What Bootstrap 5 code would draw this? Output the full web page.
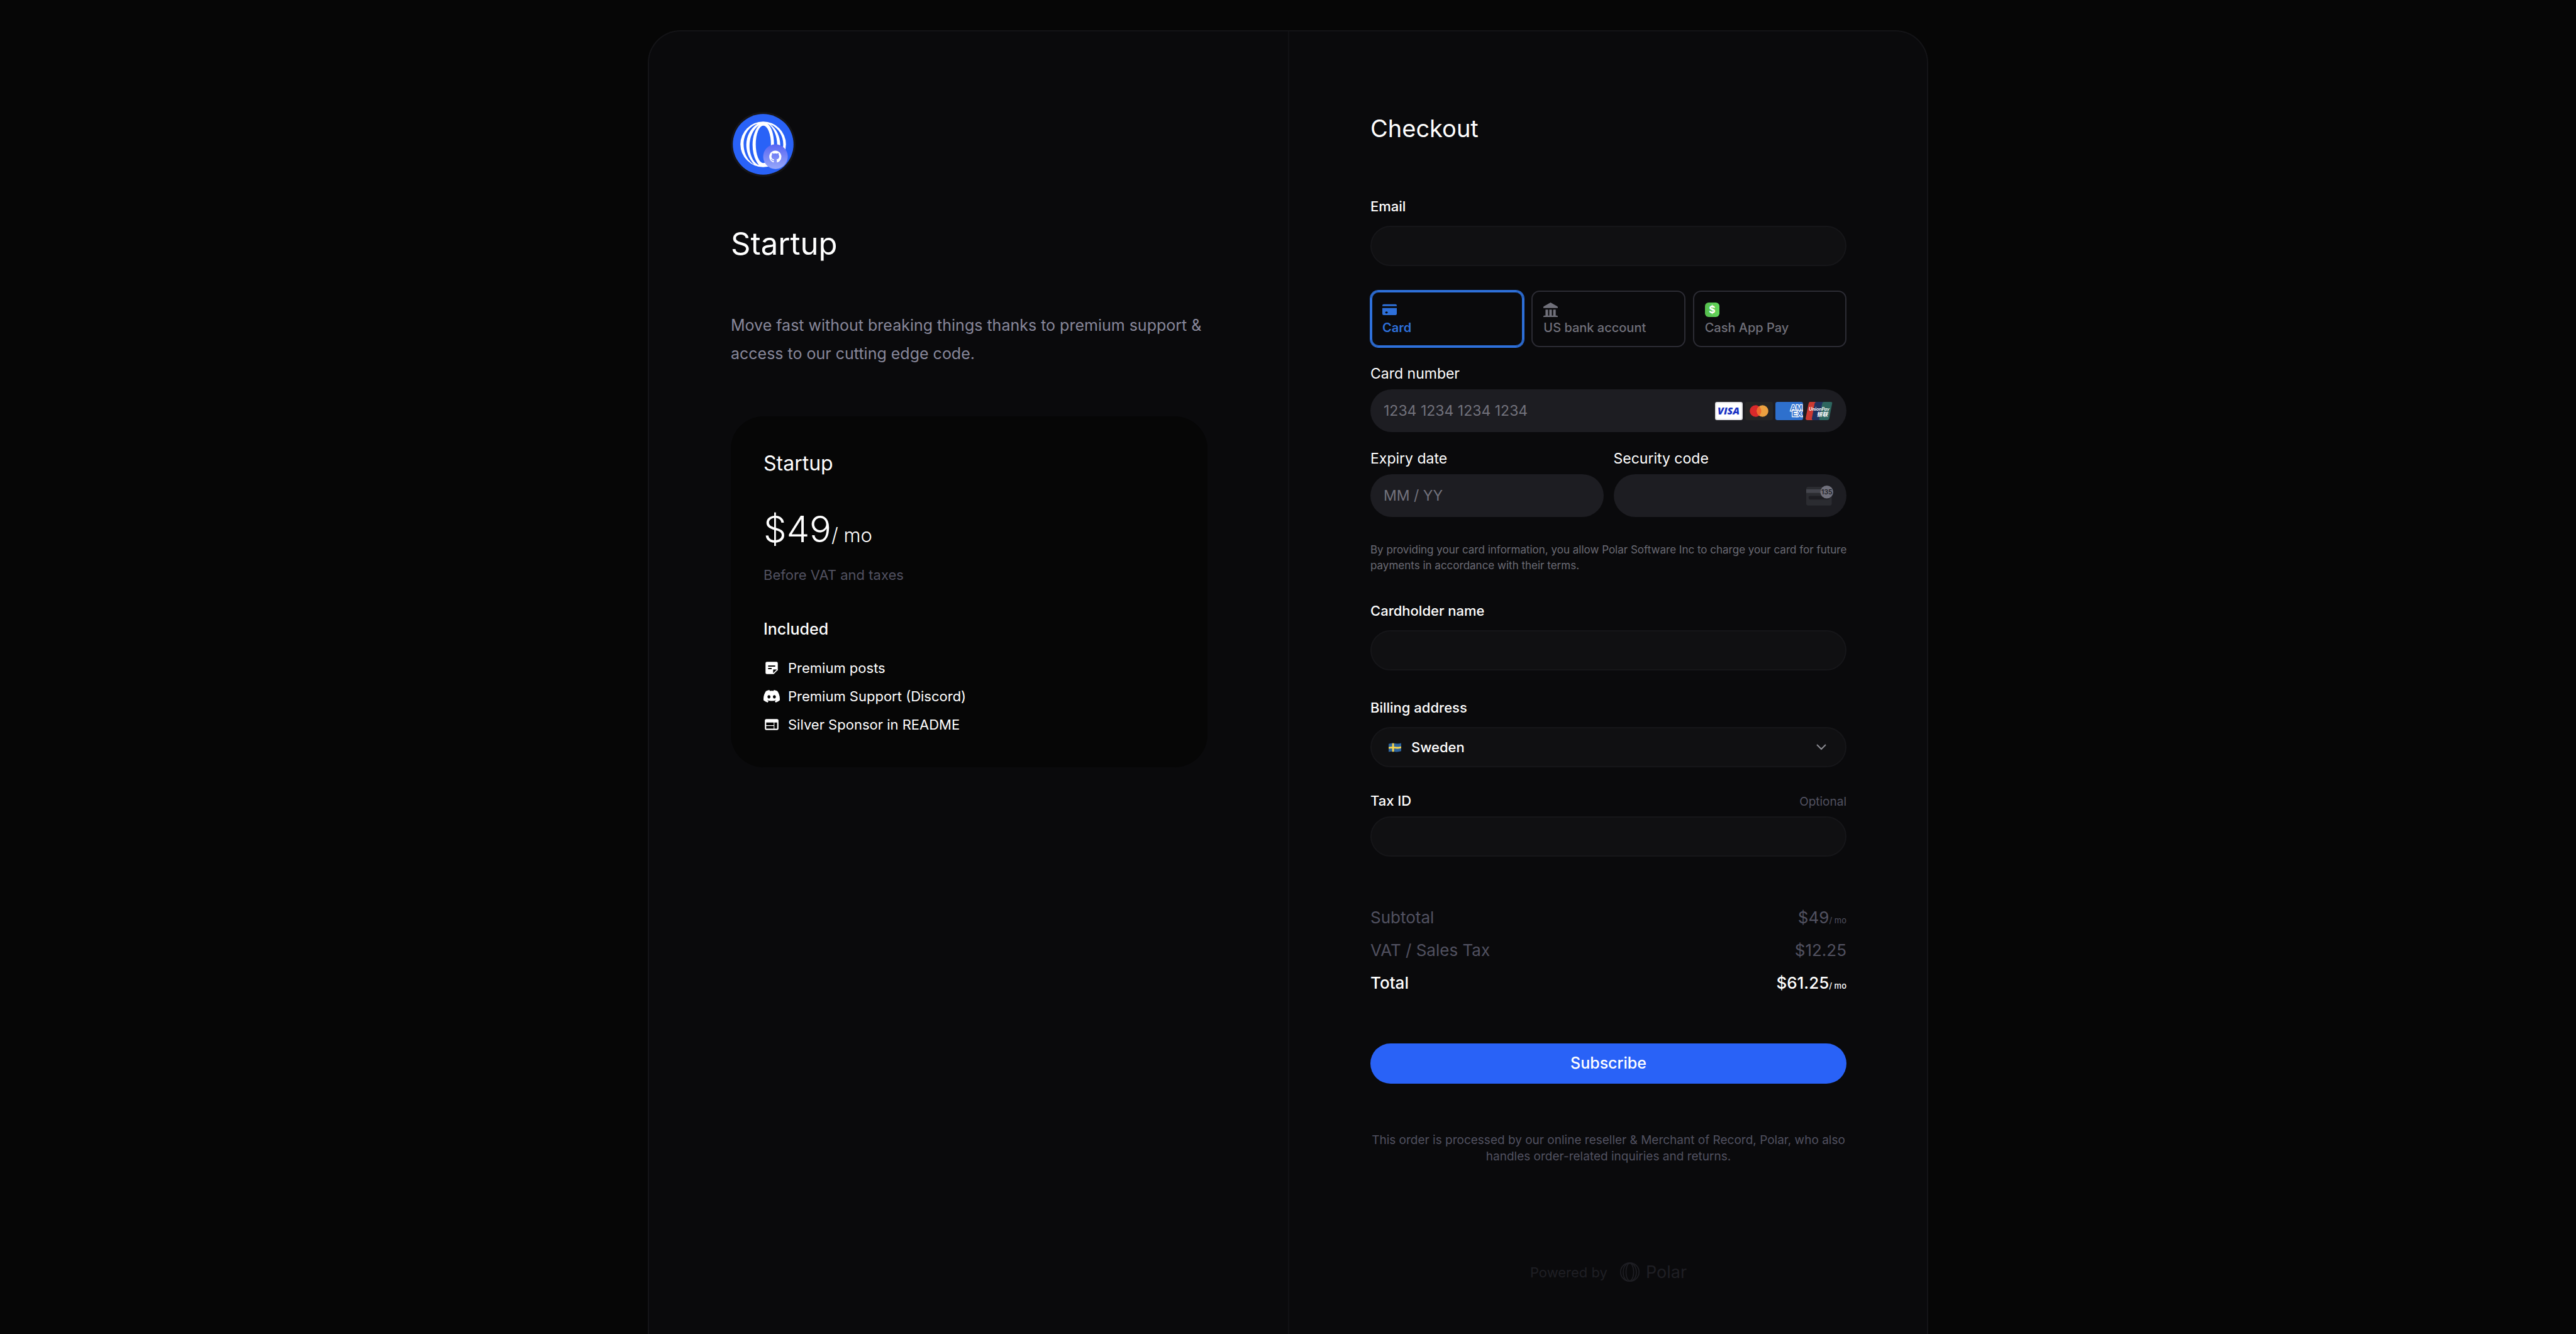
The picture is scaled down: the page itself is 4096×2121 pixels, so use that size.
<!DOCTYPE html>
<html lang="en" data-bs-theme="dark">
<head>
<meta charset="utf-8">
<meta name="viewport" content="width=device-width, initial-scale=1">
<title>Checkout</title>
<link href="https://cdn.jsdelivr.net/npm/bootstrap@5.3.0/dist/css/bootstrap.min.css" rel="stylesheet">
<style>
body { background: #060606; color: #fff; font-family: Inter, "Liberation Sans", sans-serif; font-size: 22px; line-height: 32px; }
svg { display: block; flex-shrink: 0; }
.shell { max-width: 2036px; background: #0a0a0c; border: 2px solid #141417; border-bottom: 0; border-radius: 52px 52px 0 0; }
.page-top { padding-top: 48px; }
.pane { padding: 128px 128px 80px 130px; }
.pane + .pane { border-left: 2px solid #111114; padding-left: 129px; }
.title-xl { font-size: 49px; line-height: 58px; margin: 78px 0; font-weight: 400; }
.title-lg { font-size: 38px; line-height: 52px; margin: 0 0 84px; font-weight: 400; }
.intro { font-size: 25px; line-height: 45px; color: #87879a; margin: 0 0 77px; }
.plan { background: #060606; border-radius: 52px; padding: 52px; }
.plan-name { font-size: 32px; line-height: 45px; margin: 0 0 53px; font-weight: 400; }
.price { font-size: 58px; line-height: 58px; margin: 0 0 28px; font-weight: 300; }
.price span { font-size: 31px; line-height: 1; }
.faint { color: #515160; }
.plan-note { margin: 0 0 51px; }
.plan-sub { font-size: 25px; line-height: 39px; margin: 0 0 26px; font-weight: 500; }
.perks { gap: 13px; }
.perks li { gap: 13px; }
.label-text { line-height: 28px; margin: 0 0 17px; font-weight: 500; display: block; }
.label-tight { margin-bottom: 11px; }
.label-plain { font-weight: 400; font-size: 23px; }
.field { width: 100%; height: 64px; border: 2px solid #161619; border-radius: 32px; background: #101012; color: #fff; padding: 0 27px; }
.field-pay { height: 68px; border: 0; border-radius: 34px; background: #1d1d22; padding: 0 21px; gap: 4px; font-size: 23px; }
.field input, .field select { min-width: 0; color: #fff; background: transparent; border: 0; padding: 0; outline: 0; appearance: none; }
.field input::placeholder { color: #72727c; opacity: 1; }
.space-a { margin-bottom: 39px; }
.space-b { margin-bottom: 28px; }
.space-c { margin-bottom: 45px; }
.half { flex: 1 1 0; min-width: 0; }
.methods { gap: 12px; }
.method { flex: 1 1 0; height: 90px; border: 2px solid #2c2c34; border-radius: 13px; padding: 14px 17px; color: #70707a; font-size: 20px; line-height: 28px; font-weight: 500; cursor: pointer; }
.method svg { margin: 3px 0 3px; }
.btn-check:checked + .method { border-color: #2e70da; color: #2e70da; box-shadow: 0 0 0 1px #2e70da, inset 0 0 0 1px #2e70da; font-weight: 600; }
.terms { font-size: 17px; line-height: 25px; color: #6a6a74; margin: 40px -6px 45px 0; }
.fine { font-size: 19px; line-height: 26px; }
.sums { font-size: 26px; line-height: 39px; gap: 13px; margin: 77px 0; }
.sums small { font-size: 13px; line-height: 1; }
.subscribe { height: 64px; border-radius: 32px; background: #2962f7; border: 0; color: #fff; font-size: 25px; font-weight: 500; }
.merchant { margin: 77px 0 155px; }
.powered { gap: 20px; color: #1f1f24; height: 31px; }
.powered a { color: inherit; gap: 10px; font-size: 27px; }
</style>
</head>
<body>
<div class="page-top min-vh-100 d-flex justify-content-center">
  <main class="shell row g-0 w-100">
    <section class="pane col-6">
      <svg width="103" height="103" viewBox="66 36 384 384" role="img" aria-label="Polar">
        <defs><linearGradient id="badge" x1="0" y1="0" x2="0" y2="1"><stop offset="0" stop-color="#5865f2"/><stop offset="1" stop-color="#98a8fa"/></linearGradient></defs>
        <circle cx="258" cy="228" r="192" fill="#151518"/>
        <circle cx="258" cy="228" r="180" fill="#2962f7"/>
        <circle cx="258" cy="228" r="135" fill="#fff"/>
        <g fill="#2962f7">
          <ellipse cx="259" cy="228" rx="45" ry="111"/>
          <path d="M225 106C165 125 142 180 142 228C142 280 168 328 205 348C175 315 158 275 158 230C158 180 185 130 225 106Z"/>
          <path d="M235 113C195 140 177 190 177 238C177 290 200 338 233 352C208 320 195 280 195 230C195 180 212 135 235 113Z"/>
          <path d="M283 104C308 125 322 170 322 225C322 280 308 325 286 345C318 330 341 285 341 230C341 180 320 125 283 104Z"/>
          <path d="M300 110C335 135 359 180 359 230C359 270 345 310 320 342C355 315 377 275 377 228C377 180 350 130 300 110Z"/>
        </g>
        <circle cx="331" cy="301" r="73" fill="url(#badge)"/>
        <path transform="translate(294 265) scale(4.5)" fill="#fff" d="M8 0C3.58 0 0 3.58 0 8c0 3.54 2.29 6.53 5.47 7.59.4.07.55-.17.55-.38 0-.19-.01-.82-.01-1.49-2.01.37-2.53-.49-2.69-.94-.09-.23-.48-.94-.82-1.13-.28-.15-.68-.52-.01-.53.63-.01 1.08.58 1.23.82.72 1.21 1.87.87 2.33.66.07-.52.28-.87.51-1.07-1.78-.2-3.64-.89-3.64-3.95 0-.87.31-1.59.82-2.15-.08-.2-.36-1.02.08-2.12 0 0 .67-.21 2.2.82.64-.18 1.32-.27 2-.27s1.36.09 2 .27c1.53-1.04 2.2-.82 2.2-.82.44 1.1.16 1.92.08 2.12.51.56.82 1.27.82 2.15 0 3.07-1.87 3.75-3.65 3.95.29.25.54.73.54 1.48 0 1.07-.01 1.93-.01 2.2 0 .21.15.46.55.38A8.01 8.01 0 0 0 16 8c0-4.42-3.58-8-8-8"/>
      </svg>
      <h1 class="title-xl">Startup</h1>
      <p class="intro">Move fast without breaking things thanks to premium support &amp; access to our cutting edge code.</p>
      <article class="plan">
        <h2 class="plan-name">Startup</h2>
        <p class="price">$49<span>/ mo</span></p>
        <p class="plan-note faint">Before VAT and taxes</p>
        <h3 class="plan-sub">Included</h3>
        <ul class="perks list-unstyled d-flex flex-column mb-0">
          <li class="d-flex align-items-center">
            <svg width="26" height="26" viewBox="0 0 24 24"><path fill="#fff" d="M5 3h14a2 2 0 0 1 2 2v10l-6 6H5a2 2 0 0 1-2-2V5a2 2 0 0 1 2-2z"/><path fill="#060606" d="M6.8 8.2h10.4v1.9H6.8zM6.8 12H12v1.9H6.8zM14.2 14.2h5.4l-5.4 5.4z"/></svg>
            <span>Premium posts</span>
          </li>
          <li class="d-flex align-items-center">
            <svg width="26" height="26" viewBox="0 0 16 16" fill="#fff"><path d="M13.545 2.907a13.2 13.2 0 0 0-3.257-1.011.05.05 0 0 0-.052.025c-.141.25-.297.577-.406.833a12.2 12.2 0 0 0-3.658 0 8 8 0 0 0-.412-.833.05.05 0 0 0-.052-.025c-1.125.194-2.22.534-3.257 1.011a.04.04 0 0 0-.021.018C.356 6.024-.213 9.047.066 12.032q.003.022.021.037a13.3 13.3 0 0 0 3.995 2.02.05.05 0 0 0 .056-.019q.463-.63.818-1.329a.05.05 0 0 0-.01-.059l-.018-.011a9 9 0 0 1-1.248-.595.05.05 0 0 1-.02-.066l.015-.019q.127-.095.248-.195a.05.05 0 0 1 .051-.007c2.619 1.196 5.454 1.196 8.041 0a.05.05 0 0 1 .053.007q.121.1.248.195a.05.05 0 0 1-.004.085 8 8 0 0 1-1.249.594.05.05 0 0 0-.03.03.05.05 0 0 0 .003.041c.24.465.515.909.817 1.329a.05.05 0 0 0 .056.019 13.2 13.2 0 0 0 4.001-2.02.05.05 0 0 0 .021-.037c.334-3.451-.559-6.449-2.366-9.106a.03.03 0 0 0-.02-.019m-8.198 7.307c-.789 0-1.438-.724-1.438-1.612s.637-1.613 1.438-1.613c.807 0 1.45.73 1.438 1.613 0 .888-.637 1.612-1.438 1.612m5.316 0c-.788 0-1.438-.724-1.438-1.612s.637-1.613 1.438-1.613c.807 0 1.451.73 1.438 1.613 0 .888-.631 1.612-1.438 1.612"/></svg>
            <span>Premium Support (Discord)</span>
          </li>
          <li class="d-flex align-items-center">
            <svg width="26" height="26" viewBox="0 0 24 24" fill="#fff"><path d="M20 4H4c-1.1 0-1.99.9-1.99 2L2 18c0 1.1.9 2 2 2h16c1.1 0 2-.9 2-2V6c0-1.1-.9-2-2-2zm-5 14H4v-4h11v4zm0-5H4V9h11v4zm5 5h-4V9h4v9z"/></svg>
            <span>Silver Sponsor in README</span>
          </li>
        </ul>
      </article>
    </section>

    <section class="pane col-6">
      <h2 class="title-lg">Checkout</h2>
      <form>
        <label class="label-text" for="email">Email</label>
        <input class="field space-a d-block" id="email" type="email">

        <div class="methods d-flex space-b">
          <input class="btn-check" type="radio" name="method" id="m-card" checked>
          <label class="method" for="m-card">
            <svg width="23" height="23" viewBox="0 0 87 87" fill="#2e70da"><path d="M8 10h71a8 8 0 0 1 8 8v4H0v-4a8 8 0 0 1 8-8z"/><path fill-rule="evenodd" d="M0 33h87v35a8 8 0 0 1-8 8H8a8 8 0 0 1-8-8zM17 60a8 6 0 1 0 16 0a8 6 0 1 0-16 0z"/></svg>
            Card
          </label>
          <input class="btn-check" type="radio" name="method" id="m-bank">
          <label class="method" for="m-bank">
            <svg width="23" height="23" viewBox="0 0 16 16" fill="#70707a"><path d="M8 0l7.4 4.2q.6.4.6 1V6H0v-.8q0-.6.6-1zM2.4 7.8h2.8v6.6H2.4zM6.6 7.8h2.8v6.6H6.6zM10.9 7.8h2.8v6.6h-2.8zM.8 14.4h14.4l.8.8v.8H0v-.8z"/></svg>
            US bank account
          </label>
          <input class="btn-check" type="radio" name="method" id="m-cash">
          <label class="method" for="m-cash">
            <svg width="23" height="23" viewBox="0 0 16 16"><defs><linearGradient id="cash" x1="0" x2="1" y1="0" y2="0"><stop offset="0" stop-color="#55bd4d"/><stop offset="1" stop-color="#62d65b"/></linearGradient></defs><rect width="16" height="16" rx="4" fill="url(#cash)"/><text x="8" y="11.9" text-anchor="middle" font-size="11" font-weight="700" fill="#fff">$</text></svg>
            Cash App Pay
          </label>
        </div>

        <label class="label-text label-tight label-plain" for="number">Card number</label>
        <div class="field field-pay space-b d-flex align-items-center">
          <input class="flex-grow-1" id="number" type="text" inputmode="numeric" placeholder="1234 1234 1234 1234">
          <svg width="44" height="29" viewBox="0 0 55 36"><rect x="1" y="1" width="53" height="34" rx="3" fill="#fff" stroke="#dcdce0" stroke-width="2"/><text x="27" y="25.500" text-anchor="middle" font-family="Open Sans, sans-serif" font-size="20" font-weight="800" font-style="italic" fill="#1a33c4">VISA</text></svg>
          <svg width="44" height="29" viewBox="0 0 55 36"><rect width="55" height="36" rx="4" fill="#252525"/><circle cx="20.500" cy="18" r="11.500" fill="#d9292b"/><circle cx="34.500" cy="18" r="11.500" fill="#eba140"/><path d="M27.500 9a11.500 11.500 0 0 1 0 18a11.500 11.500 0 0 1 0-18z" fill="#ee6b2d"/></svg>
          <svg width="44" height="29" viewBox="0 0 55 36"><rect width="55" height="36" rx="4" fill="#2e70cd"/><g font-family="Liberation Sans, sans-serif" font-size="15" font-weight="700" fill="#2e70cd" stroke="#fff" stroke-width="3" paint-order="stroke"><text x="30" y="17">AM</text><text x="33" y="29">EX</text></g></svg>
          <svg width="44" height="29" viewBox="0 0 55 36"><path fill="#cc3a32" d="M9 0H24L17 36H3q-3 0-3-3L6 3q.6-3 3-3z"/><path fill="#20315f" d="M22 0H40L32 36H15q-3 0-2.500-3L18 3q.6-3 4-3z"/><path fill="#2d665f" d="M37 0H50q3.500 0 2.800 3L47 33q-.6 3-3.500 3H29q-2.600 0-2-3L33 3q.6-3 4-3z"/><g fill="#fff" font-weight="700" font-style="italic" text-anchor="middle"><text x="27" y="18" font-family="Lato, sans-serif" font-size="10">UnionPay</text><text x="33" y="28.500" font-family="Noto Sans CJK SC, sans-serif" font-size="11">银联</text></g></svg>
        </div>

        <div class="d-flex gap-3">
          <div class="half">
            <label class="label-text label-tight label-plain" for="expiry">Expiry date</label>
            <div class="field field-pay d-flex align-items-center"><input class="w-100" id="expiry" type="text" placeholder="MM / YY"></div>
          </div>
          <div class="half">
            <label class="label-text label-tight label-plain" for="cvc">Security code</label>
            <div class="field field-pay d-flex align-items-center">
              <input class="flex-grow-1" id="cvc" type="text">
              <svg width="43" height="33" viewBox="0 0 159 120"><rect y="6" width="150" height="110" rx="12" fill="#2b2c31"/><path d="M0 21h150v21H0z" fill="#44454d"/><rect x="14" y="60" width="124" height="21" rx="8" fill="#1d1d22"/><circle cx="121" cy="37" r="38" fill="#70707c"/><text x="121" y="52" text-anchor="middle" font-size="38" font-weight="600" fill="#1d1d22">135</text></svg>
            </div>
          </div>
        </div>
        <p class="terms">By providing your card information, you allow Polar Software Inc to charge your card for future payments in accordance with their terms.</p>

        <label class="label-text" for="holder">Cardholder name</label>
        <input class="field space-c d-block" id="holder" type="text">

        <label class="label-text" for="country">Billing address</label>
        <div class="field space-a d-flex align-items-center">
          <svg class="me-3" width="20" height="15" viewBox="0 0 24 18"><path fill="#2d639c" d="M0 2q6-2 12-.8T24 0.500V16q-6 2-12 1T0 17.500z"/><path fill="none" stroke="#fbd74c" stroke-width="3.400" d="M8.500 1v16M0 9.800q6-1.600 12-.6T24 8.500"/></svg>
          <select class="flex-grow-1 fw-medium" id="country"><option>Sweden</option></select>
          <svg width="20" height="10" viewBox="0 0 20 10"><path d="M2 1l7 7l7-7" fill="none" stroke="#8b8b92" stroke-width="2"/></svg>
        </div>

        <div class="d-flex justify-content-between align-items-baseline">
          <label class="label-text label-tight" for="tax">Tax ID</label>
          <span class="fine faint">Optional</span>
        </div>
        <input class="field d-block" id="tax" type="text">

        <div class="sums d-flex flex-column">
          <div class="d-flex justify-content-between faint"><span>Subtotal</span><span>$49<small>/ mo</small></span></div>
          <div class="d-flex justify-content-between faint"><span>VAT / Sales Tax</span><span>$12.25</span></div>
          <div class="d-flex justify-content-between fw-medium text-white"><span>Total</span><span>$61.25<small>/ mo</small></span></div>
        </div>
        <button class="subscribe btn w-100" type="submit">Subscribe</button>
      </form>
      <p class="merchant fine faint text-center">This order is processed by our online reseller &amp; Merchant of Record, Polar, who also handles order-related inquiries and returns.</p>
      <footer class="powered d-flex justify-content-center align-items-center">
        <span>Powered by</span>
        <a href="#" class="d-flex align-items-center text-decoration-none">
          <svg width="31" height="31" viewBox="0 0 112 112" fill="none" stroke="#1f1f24" stroke-width="6"><circle cx="56" cy="56" r="53"/><ellipse cx="56" cy="56" rx="22" ry="50"/><path d="M50 4C8 18 8 92 44 108M62 4C104 20 104 94 64 108"/></svg>
          <span>Polar</span>
        </a>
      </footer>
    </section>
  </main>
</div>
<script src="https://cdn.jsdelivr.net/npm/bootstrap@5.3.0/dist/js/bootstrap.bundle.min.js"></script>
</body>
</html>
